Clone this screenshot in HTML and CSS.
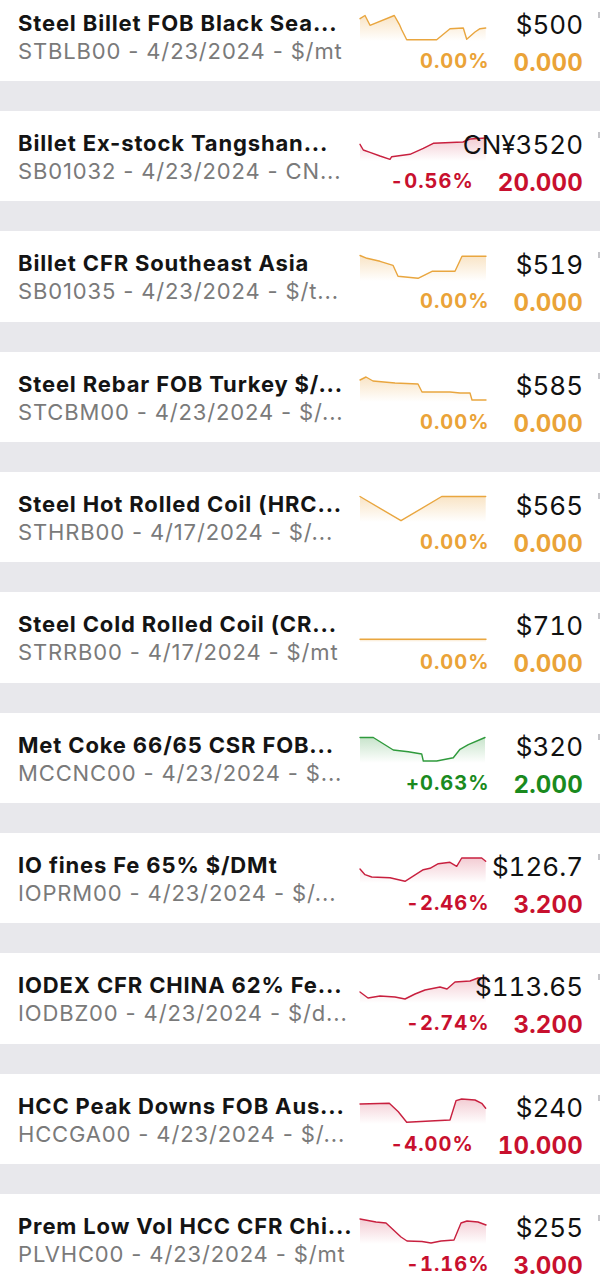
FILE: index.html
```html
<!DOCTYPE html>
<html>
<head>
<meta charset="utf-8">
<link rel="stylesheet" href="styles.css">
</head>
<body>
<div class="list">

  <div class="card">
    <div class="info">
      <div class="title">Steel Billet FOB Black Sea...</div>
      <div class="sub">STBLB00 - 4/23/2024 - $/mt</div>
    </div>
    <div class="quote flat">
      <div class="top">
        <svg class="spark" viewBox="0 0 126 26"><defs><linearGradient id="g1" x1="0" y1="0" x2="0" y2="1"><stop offset="0" stop-color="#eba53e" stop-opacity="0.3"/><stop offset="1" stop-color="#eba53e" stop-opacity="0"/></linearGradient></defs>
          <path fill="url(#g1)" d="M0,3.7 L5,0.5 L10,10.3 L34.3,0.5 L39.3,9.3 L41.7,14.7 L46.7,24.7 L76.7,24.7 L90,13.7 L103.3,13 L106.7,24.3 L115,17 L120,13.7 L125.7,13 L125.7,26 L0,26 Z"/>
          <polyline class="line" points="0,3.7 5,0.5 10,10.3 34.3,0.5 39.3,9.3 41.7,14.7 46.7,24.7 76.7,24.7 90,13.7 103.3,13 106.7,24.3 115,17 120,13.7 125.7,13"/>
        </svg>
        <div class="price">$500</div>
      </div>
      <div class="bottom">
        <div class="pct">0.00%</div>
        <div class="chg">0.000</div>
      </div>
    </div>
  </div>

  <div class="card">
    <div class="info">
      <div class="title">Billet Ex-stock Tangshan...</div>
      <div class="sub">SB01032 - 4/23/2024 - CN...</div>
    </div>
    <div class="quote down">
      <div class="top">
        <svg class="spark" viewBox="0 0 126 26"><defs><linearGradient id="g2" x1="0" y1="0" x2="0" y2="1"><stop offset="0" stop-color="#d0334f" stop-opacity="0.25"/><stop offset="1" stop-color="#d0334f" stop-opacity="0"/></linearGradient></defs>
          <path fill="url(#g2)" d="M0,9.3 L3.3,15 L10,17.3 L20,21 L30,24.3 L31.7,21.7 L50,19.3 L63.3,13.3 L73.3,8.3 L96.7,7.3 L103,7 L110,4 L126,3 L126,26 L0,26 Z"/>
          <polyline class="line" points="0,9.3 3.3,15 10,17.3 20,21 30,24.3 31.7,21.7 50,19.3 63.3,13.3 73.3,8.3 96.7,7.3 103,7 110,4 126,3"/>
        </svg>
        <div class="price">CN¥3520</div>
      </div>
      <div class="bottom">
        <div class="pct">-0.56%</div>
        <div class="chg">20.000</div>
      </div>
    </div>
  </div>

  <div class="card">
    <div class="info">
      <div class="title">Billet CFR Southeast Asia</div>
      <div class="sub">SB01035 - 4/23/2024 - $/t...</div>
    </div>
    <div class="quote flat">
      <div class="top">
        <svg class="spark" viewBox="0 0 126 26"><defs><linearGradient id="g3" x1="0" y1="0" x2="0" y2="1"><stop offset="0" stop-color="#eba53e" stop-opacity="0.3"/><stop offset="1" stop-color="#eba53e" stop-opacity="0"/></linearGradient></defs>
          <path fill="url(#g3)" d="M0,0.5 L7,3.3 L20,6.3 L33,10.3 L38,21.3 L58,23.3 L72,16.3 L95,16.3 L102,1.3 L126,1.3 L126,26 L0,26 Z"/>
          <polyline class="line" points="0,0.5 7,3.3 20,6.3 33,10.3 38,21.3 58,23.3 72,16.3 95,16.3 102,1.3 126,1.3"/>
        </svg>
        <div class="price">$519</div>
      </div>
      <div class="bottom">
        <div class="pct">0.00%</div>
        <div class="chg">0.000</div>
      </div>
    </div>
  </div>

  <div class="card">
    <div class="info">
      <div class="title">Steel Rebar FOB Turkey $/...</div>
      <div class="sub">STCBM00 - 4/23/2024 - $/...</div>
    </div>
    <div class="quote flat">
      <div class="top">
        <svg class="spark" viewBox="0 0 126 26"><defs><linearGradient id="g4" x1="0" y1="0" x2="0" y2="1"><stop offset="0" stop-color="#eba53e" stop-opacity="0.3"/><stop offset="1" stop-color="#eba53e" stop-opacity="0"/></linearGradient></defs>
          <path fill="url(#g4)" d="M0,4 L6,1 L13,5 L35,7 L58,8 L62,16 L90,16 L100,17 L110,17 L112,24 L126,24 L126,26 L0,26 Z"/>
          <polyline class="line" points="0,4 6,1 13,5 35,7 58,8 62,16 90,16 100,17 110,17 112,24 126,24"/>
        </svg>
        <div class="price">$585</div>
      </div>
      <div class="bottom">
        <div class="pct">0.00%</div>
        <div class="chg">0.000</div>
      </div>
    </div>
  </div>

  <div class="card">
    <div class="info">
      <div class="title">Steel Hot Rolled Coil (HRC...</div>
      <div class="sub">STHRB00 - 4/17/2024 - $/...</div>
    </div>
    <div class="quote flat">
      <div class="top">
        <svg class="spark" viewBox="0 0 126 26"><defs><linearGradient id="g5" x1="0" y1="0" x2="0" y2="1"><stop offset="0" stop-color="#eba53e" stop-opacity="0.3"/><stop offset="1" stop-color="#eba53e" stop-opacity="0"/></linearGradient></defs>
          <path fill="url(#g5)" d="M0,0.5 L41,24.7 L81.7,0.5 L125.7,0.5 L125.7,26 L0,26 Z"/>
          <polyline class="line" points="0,0.5 41,24.7 81.7,0.5 125.7,0.5"/>
        </svg>
        <div class="price">$565</div>
      </div>
      <div class="bottom">
        <div class="pct">0.00%</div>
        <div class="chg">0.000</div>
      </div>
    </div>
  </div>

  <div class="card">
    <div class="info">
      <div class="title">Steel Cold Rolled Coil (CR...</div>
      <div class="sub">STRRB00 - 4/17/2024 - $/mt</div>
    </div>
    <div class="quote flat">
      <div class="top">
        <svg class="spark" viewBox="0 0 126 26"><defs><linearGradient id="g6" x1="0" y1="0" x2="0" y2="1"><stop offset="0" stop-color="#eba53e" stop-opacity="0.3"/><stop offset="1" stop-color="#eba53e" stop-opacity="0"/></linearGradient></defs>
          <path fill="url(#g6)" d="M0,23.3 L126,23.3 L126,26 L0,26 Z"/>
          <polyline class="line" points="0,23.3 126,23.3"/>
        </svg>
        <div class="price">$710</div>
      </div>
      <div class="bottom">
        <div class="pct">0.00%</div>
        <div class="chg">0.000</div>
      </div>
    </div>
  </div>

  <div class="card">
    <div class="info">
      <div class="title">Met Coke 66/65 CSR FOB...</div>
      <div class="sub">MCCNC00 - 4/23/2024 - $...</div>
    </div>
    <div class="quote up">
      <div class="top">
        <svg class="spark" viewBox="0 0 126 26"><defs><linearGradient id="g7" x1="0" y1="0" x2="0" y2="1"><stop offset="0" stop-color="#3a9e46" stop-opacity="0.28"/><stop offset="1" stop-color="#3a9e46" stop-opacity="0"/></linearGradient></defs>
          <path fill="url(#g7)" d="M0,0.5 L13.3,0.5 L33.3,13 L48.3,14.7 L61.7,17 L63.3,24 L76.7,24 L93.3,20.7 L100,12.3 L108.3,7.7 L125,0.5 L125,26 L0,26 Z"/>
          <polyline class="line" points="0,0.5 13.3,0.5 33.3,13 48.3,14.7 61.7,17 63.3,24 76.7,24 93.3,20.7 100,12.3 108.3,7.7 125,0.5"/>
        </svg>
        <div class="price">$320</div>
      </div>
      <div class="bottom">
        <div class="pct">+0.63%</div>
        <div class="chg">2.000</div>
      </div>
    </div>
  </div>

  <div class="card">
    <div class="info">
      <div class="title">IO fines Fe 65% $/DMt</div>
      <div class="sub">IOPRM00 - 4/23/2024 - $/...</div>
    </div>
    <div class="quote down">
      <div class="top">
        <svg class="spark" viewBox="0 0 126 26"><defs><linearGradient id="g8" x1="0" y1="0" x2="0" y2="1"><stop offset="0" stop-color="#d0334f" stop-opacity="0.25"/><stop offset="1" stop-color="#d0334f" stop-opacity="0"/></linearGradient></defs>
          <path fill="url(#g8)" d="M0,12 L5,17.7 L11.7,20 L30,20.7 L45,24.3 L63.3,12.7 L70,11.3 L78.3,6.7 L90,5.3 L96.7,9.3 L101.7,1 L121.7,1 L125.7,4.3 L125.7,26 L0,26 Z"/>
          <polyline class="line" points="0,12 5,17.7 11.7,20 30,20.7 45,24.3 63.3,12.7 70,11.3 78.3,6.7 90,5.3 96.7,9.3 101.7,1 121.7,1 125.7,4.3"/>
        </svg>
        <div class="price">$126.7</div>
      </div>
      <div class="bottom">
        <div class="pct">-2.46%</div>
        <div class="chg">3.200</div>
      </div>
    </div>
  </div>

  <div class="card">
    <div class="info">
      <div class="title">IODEX CFR CHINA 62% Fe...</div>
      <div class="sub">IODBZ00 - 4/23/2024 - $/d...</div>
    </div>
    <div class="quote down">
      <div class="top">
        <svg class="spark" viewBox="0 0 126 26"><defs><linearGradient id="g9" x1="0" y1="0" x2="0" y2="1"><stop offset="0" stop-color="#d0334f" stop-opacity="0.25"/><stop offset="1" stop-color="#d0334f" stop-opacity="0"/></linearGradient></defs>
          <path fill="url(#g9)" d="M0,15 L8,21 L20,19 L35,20 L45,22 L55,17 L65,13 L80,10 L87,12 L95,5 L110,4 L118,1 L126,0.5 L126,26 L0,26 Z"/>
          <polyline class="line" points="0,15 8,21 20,19 35,20 45,22 55,17 65,13 80,10 87,12 95,5 110,4 118,1 126,0.5"/>
        </svg>
        <div class="price">$113.65</div>
      </div>
      <div class="bottom">
        <div class="pct">-2.74%</div>
        <div class="chg">3.200</div>
      </div>
    </div>
  </div>

  <div class="card">
    <div class="info">
      <div class="title">HCC Peak Downs FOB Aus...</div>
      <div class="sub">HCCGA00 - 4/23/2024 - $/...</div>
    </div>
    <div class="quote down">
      <div class="top">
        <svg class="spark" viewBox="0 0 126 26"><defs><linearGradient id="g10" x1="0" y1="0" x2="0" y2="1"><stop offset="0" stop-color="#d0334f" stop-opacity="0.25"/><stop offset="1" stop-color="#d0334f" stop-opacity="0"/></linearGradient></defs>
          <path fill="url(#g10)" d="M0,6 L29.3,5.3 L38.3,13.7 L46.7,24.3 L75,22.7 L90,22 L96,2.7 L101.7,1 L115,2 L121.7,5.3 L125.7,10.3 L125.7,26 L0,26 Z"/>
          <polyline class="line" points="0,6 29.3,5.3 38.3,13.7 46.7,24.3 75,22.7 90,22 96,2.7 101.7,1 115,2 121.7,5.3 125.7,10.3"/>
        </svg>
        <div class="price">$240</div>
      </div>
      <div class="bottom">
        <div class="pct">-4.00%</div>
        <div class="chg">10.000</div>
      </div>
    </div>
  </div>

  <div class="card">
    <div class="info">
      <div class="title">Prem Low Vol HCC CFR Chi...</div>
      <div class="sub">PLVHC00 - 4/23/2024 - $/mt</div>
    </div>
    <div class="quote down">
      <div class="top">
        <svg class="spark" viewBox="0 0 126 26"><defs><linearGradient id="g11" x1="0" y1="0" x2="0" y2="1"><stop offset="0" stop-color="#d0334f" stop-opacity="0.25"/><stop offset="1" stop-color="#d0334f" stop-opacity="0"/></linearGradient></defs>
          <path fill="url(#g11)" d="M0,1 L16,4 L26,5 L41,19 L47,23 L62,23.5 L71,25 L81,23 L94,22 L101,5 L107,3 L118,4 L126,7 L126,26 L0,26 Z"/>
          <polyline class="line" points="0,1 16,4 26,5 41,19 47,23 62,23.5 71,25 81,23 94,22 101,5 107,3 118,4 126,7"/>
        </svg>
        <div class="price">$255</div>
      </div>
      <div class="bottom">
        <div class="pct">-1.16%</div>
        <div class="chg">3.000</div>
      </div>
    </div>
  </div>

</div>
</body>
</html>
```

FILE: styles.css
```css
html, body {
  margin: 0;
  padding: 0;
}
body {
  background: #e8e8ec;
  font-family: Inter, Roboto, "Liberation Sans", sans-serif;
  width: 600px;
  height: 1280px;
  overflow: hidden;
}
.list {
  display: flex;
  flex-direction: column;
  gap: 30px;
  margin-top: -9.33px;
}
.card {
  position: relative;
  box-sizing: border-box;
  height: 90.33px;
  background: #ffffff;
  display: flex;
  padding: 0 17px 0 18px;
  gap: 6px;
}
.card::after {
  content: "";
  position: absolute;
  right: 0;
  top: 21px;
  width: 2px;
  height: 6px;
  background: #c4c4c8;
}
.info {
  flex: 1;
  min-width: 0;
  padding-top: 18px;
}
.title {
  font-size: 22px;
  font-weight: 700;
  letter-spacing: 0.85px;
  line-height: 28px;
  color: #141414;
  white-space: nowrap;
}
.sub {
  font-size: 22px;
  font-weight: 400;
  letter-spacing: 0.85px;
  line-height: 28px;
  color: #7a7a7a;
  white-space: nowrap;
}
.quote {
  width: 223px;
  flex: none;
  display: flex;
  flex-direction: column;
  padding-top: 24px;
}
.top {
  display: grid;
  grid-template-columns: 126px 97px;
  grid-template-rows: 26px;
}
.spark {
  grid-column: 1;
  grid-row: 1;
  width: 126px;
  height: 26px;
  overflow: visible;
}
.line {
  fill: none;
  stroke-width: 1.4;
  stroke-linejoin: round;
  stroke-linecap: round;
}
.price {
  grid-column: 1 / 3;
  grid-row: 1;
  justify-self: end;
  align-self: start;
  font-size: 26px;
  line-height: 20px;
  font-variant-numeric: tabular-nums;
  color: #111111;
  white-space: nowrap;
  position: relative;
}
.bottom {
  display: flex;
  justify-content: flex-end;
  align-items: flex-start;
  gap: 24px;
  padding-top: 8px;
}
.pct {
  font-size: 20px;
  font-weight: 700;
  letter-spacing: 1px;
  line-height: 24px;
  font-variant-numeric: tabular-nums;
  white-space: nowrap;
}
.chg {
  font-size: 24px;
  font-weight: 700;
  letter-spacing: 0.2px;
  line-height: 28px;
  font-variant-numeric: tabular-nums;
  white-space: nowrap;
}
.flat .line { stroke: #e9a63f; }
.flat .pct, .flat .chg { color: #eaa338; }
.down .line { stroke: #c8203f; }
.down .pct, .down .chg { color: #c8102e; }
.up .line { stroke: #2f9a3c; }
.up .pct, .up .chg { color: #1a8a1e; }
```
